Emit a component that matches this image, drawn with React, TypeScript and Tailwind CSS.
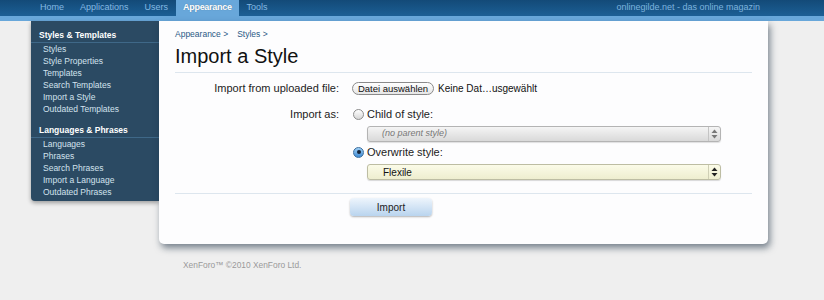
import React from 'react';

const font = "font-['Liberation_Sans',Arial,sans-serif]";

const Arrows: React.FC<{ dark?: boolean }> = ({ dark }) => (
  <svg width="7" height="10" viewBox="0 0 7 10" className="shrink-0">
    <path d="M3.5 0.5 L6.5 4 L0.5 4 Z" fill={dark ? '#222' : '#777'} />
    <path d="M3.5 9.5 L6.5 6 L0.5 6 Z" fill={dark ? '#222' : '#777'} />
  </svg>
);

const Radio: React.FC<{ checked?: boolean }> = ({ checked }) =>
  checked ? (
    <span className="w-[11px] h-[11px] rounded-full border border-[#3b6e9e] bg-gradient-to-b from-[#9fd0f5] to-[#3d8ad3] flex items-center justify-center shrink-0">
      <span className="w-[4px] h-[4px] rounded-full bg-[#14243a]" />
    </span>
  ) : (
    <span className="w-[11px] h-[11px] rounded-full border border-[#8d8d8d] bg-gradient-to-b from-[#ffffff] to-[#d6d6d6] shrink-0" />
  );

const nav = ['Home', 'Applications', 'Users', 'Appearance', 'Tools'];

const sections = [
  {
    title: 'Styles & Templates',
    items: ['Styles', 'Style Properties', 'Templates', 'Search Templates', 'Import a Style', 'Outdated Templates'],
  },
  {
    title: 'Languages & Phrases',
    items: ['Languages', 'Phrases', 'Search Phrases', 'Import a Language', 'Outdated Phrases'],
  },
];

export default function App() {
  return (
    <div className={`min-h-[300px] w-[824px] bg-[#efefef] ${font}`}>
      {/* top bar */}
      <div className="h-[16px] bg-gradient-to-b from-[#134a78] to-[#1c5f95] flex items-stretch pl-[32px] pr-[64px] text-[9px]">
        {nav.map(n =>
          n === 'Appearance' ? (
            <div key={n} className="px-[7px] bg-[#68a7da] text-white font-bold tracking-[-0.3px] flex items-center [text-shadow:0_0_1px_rgba(0,0,0,0.3)]">
              {n}
            </div>
          ) : (
            <div key={n} className="px-[8px] text-[#84b9e3] flex items-center">{n}</div>
          )
        )}
        <div className="ml-auto text-[#7db3de] flex items-center">onlinegilde.net - das online magazin</div>
      </div>
      <div className="h-[5px] bg-[#68a7da]" />

      <div className="flex items-start pl-[31px]">
        {/* sidebar */}
        <div className="w-[128px] bg-[#2b4a63] rounded-bl-[4px] shadow-[0_2px_4px_rgba(0,0,0,0.35)] pt-[8px] pb-[3px]">
          {sections.map((s, i) => (
            <div key={s.title} className={i > 0 ? 'mt-[9px]' : ''}>
              <div className="pl-[8px] text-[8.5px] font-bold text-white leading-[12px] pb-[1px] border-b border-[#3f6888]">
                {s.title}
              </div>
              <div>
                {s.items.map(it => (
                  <div key={it} className="pl-[12px] text-[8.5px] text-[#d3e2ee] leading-[12px]">{it}</div>
                ))}
              </div>
            </div>
          ))}
        </div>

        {/* main panel */}
        <div className="w-[609px] bg-[#fdfdfe] rounded-b-[5px] shadow-[2px_4px_7px_rgba(20,40,60,0.55)] px-[16px] pt-[7px] pb-[28px]">
          <div className="text-[8.5px] leading-[12px] text-[#2b5a86] flex gap-[9px]">
            <span>Appearance &gt;</span>
            <span>Styles &gt;</span>
          </div>
          <h1 className="mt-[4px] text-[20px] leading-[24px] text-[#111]">Import a Style</h1>
          <div className="mt-[4px] h-px bg-[#dde6ee]" />

          <div className="text-[11px] text-[#222]">
            <div className="mt-[9px] flex items-center h-[13px]">
              <div className="w-[164px] text-right">Import from uploaded file:</div>
              <div className="ml-[13px] flex items-center">
                <span className="h-[13px] w-[82px] rounded-full border border-[#8a8a8a] bg-gradient-to-b from-white to-[#e6e6e6] text-[9.5px] leading-[11px] flex items-center justify-center text-[#111]">
                  Datei auswählen
                </span>
                <span className="ml-[4px] text-[10px] text-[#111]">Keine Dat…usgewählt</span>
              </div>
            </div>

            <div className="mt-[12px] flex items-center h-[14px]">
              <div className="w-[164px] text-right">Import as:</div>
              <div className="ml-[14px] flex items-center gap-[3px]">
                <Radio />
                <span>Child of style:</span>
              </div>
            </div>

            <div className="mt-[5px] ml-[192px] w-[354px] h-[16px] rounded-[3px] border border-[#b4b4b4] bg-gradient-to-b from-[#f5f5f5] to-[#d9d9d9] shadow-[0_1px_1px_rgba(0,0,0,0.12)] flex items-center">
              <span className="pl-[14px] flex-1 italic text-[9px] text-[#777]">(no parent style)</span>
              <span className="h-full border-l border-[#c4c4c4] w-[12px] flex items-center justify-center">
                <Arrows />
              </span>
            </div>

            <div className="mt-[3px] ml-[178px] flex items-center gap-[3px] h-[14px]">
              <Radio checked />
              <span>Overwrite style:</span>
            </div>

            <div className="mt-[5px] ml-[192px] w-[354px] h-[16px] rounded-[3px] border border-[#bdbda3] bg-gradient-to-b from-[#fbfbe8] to-[#eeeecf] shadow-[0_1px_1px_rgba(0,0,0,0.15)] flex items-center">
              <span className="pl-[15px] flex-1 text-[10px] text-[#111]">Flexile</span>
              <span className="h-full border-l border-[#cfcfb5] w-[12px] flex items-center justify-center">
                <Arrows dark />
              </span>
            </div>
          </div>

          <div className="mt-[13px] h-px bg-[#dde6ee]" />
          <div className="mt-[4px] ml-[175px] w-[82px] h-[18px] rounded-[4px] bg-gradient-to-b from-[#eef5fc] to-[#b9d4ee] shadow-[0_1px_2px_rgba(0,0,0,0.3)] text-[10px] text-[#222] flex items-center justify-center">
            Import
          </div>
        </div>
      </div>

      <div className="mt-[15px] pl-[183px] text-[8.4px] leading-[12px] text-[#9a9a9a]">XenForo™ ©2010 XenForo Ltd.</div>
    </div>
  );
}
